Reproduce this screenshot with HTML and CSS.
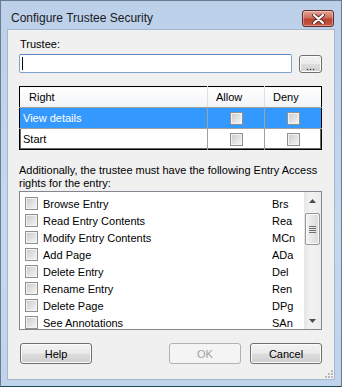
FILE: index.html
```html
<!DOCTYPE html>
<html lang="en">
<head>
    <meta charset="UTF-8">
    <title>Configure Trustee Security</title>
    <link rel="stylesheet" href="styles.css">
</head>
<body>
    <div class="window">
        <!-- Title bar -->
        <div class="titlebar">
            <span class="title">Configure Trustee Security</span>
            <button class="close-btn" aria-label="Close">
                <svg width="17" height="10" viewBox="0 0 17 10">
                    <path d="M4 1 L13 9 M13 1 L4 9" stroke="#5a2a2a" stroke-width="4" stroke-linecap="round"/>
                    <path d="M4 1 L13 9 M13 1 L4 9" stroke="#ffffff" stroke-width="2.2" stroke-linecap="round"/>
                </svg>
            </button>
        </div>

        <div class="client">
            <div class="label">Trustee:</div>
            <div class="trustee-row">
                <div class="text-input"><span class="caret"></span></div>
                <button class="btn browse-btn">...</button>
            </div>

            <table class="rights">
                <thead>
                    <tr>
                        <th class="col-right">Right</th>
                        <th class="col-allow">Allow</th>
                        <th class="col-deny">Deny</th>
                    </tr>
                </thead>
                <tbody>
                    <tr class="selected">
                        <td>View details</td>
                        <td class="center"><span class="check"></span></td>
                        <td class="center"><span class="check"></span></td>
                    </tr>
                    <tr>
                        <td>Start</td>
                        <td class="center"><span class="check"></span></td>
                        <td class="center"><span class="check"></span></td>
                    </tr>
                </tbody>
            </table>

            <p class="note">Additionally, the trustee must have the following Entry Access rights for the entry:</p>

            <div class="listbox">
                <ul class="items">
                    <li><span class="check"></span><span class="name">Browse Entry</span><span class="abbr">Brs</span></li>
                    <li><span class="check"></span><span class="name">Read Entry Contents</span><span class="abbr">Rea</span></li>
                    <li><span class="check"></span><span class="name">Modify Entry Contents</span><span class="abbr">MCn</span></li>
                    <li><span class="check"></span><span class="name">Add Page</span><span class="abbr">ADa</span></li>
                    <li><span class="check"></span><span class="name">Delete Entry</span><span class="abbr">Del</span></li>
                    <li><span class="check"></span><span class="name">Rename Entry</span><span class="abbr">Ren</span></li>
                    <li><span class="check"></span><span class="name">Delete Page</span><span class="abbr">DPg</span></li>
                    <li><span class="check"></span><span class="name">See Annotations</span><span class="abbr">SAn</span></li>
                </ul>
                <div class="scrollbar">
                    <div class="arrow">
                        <svg width="7" height="4" viewBox="0 0 7 4"><path d="M0 4 L3.5 0 L7 4 Z" fill="#4d4d4d"/></svg>
                    </div>
                    <div class="track">
                        <div class="thumb">
                            <span class="grip"></span>
                        </div>
                    </div>
                    <div class="arrow">
                        <svg width="7" height="4" viewBox="0 0 7 4"><path d="M0 0 L7 0 L3.5 4 Z" fill="#4d4d4d"/></svg>
                    </div>
                </div>
            </div>

            <div class="button-row">
                <button class="btn dialog-btn">Help</button>
                <div class="spacer"></div>
                <button class="btn dialog-btn" disabled>OK</button>
                <button class="btn dialog-btn">Cancel</button>
            </div>

            <div class="grip-row">
                <svg class="size-grip" width="9" height="9" viewBox="0 0 9 9">
                    <g fill="#b8b8b8">
                        <rect x="7" y="1" width="2" height="2"/>
                        <rect x="4" y="4" width="2" height="2"/>
                        <rect x="7" y="4" width="2" height="2"/>
                        <rect x="1" y="7" width="2" height="2"/>
                        <rect x="4" y="7" width="2" height="2"/>
                        <rect x="7" y="7" width="2" height="2"/>
                    </g>
                </svg>
            </div>
        </div>
    </div>
</body>
</html>
```

FILE: styles.css
```css
body {
    margin: 0;
    font-family: "Liberation Sans", Arial, sans-serif;
    font-size: 11px;
    color: #000;
}

.window {
    width: 342px;
    height: 387px;
    box-sizing: border-box;
    border: 1px solid #6b7c8f;
    border-bottom-color: #1f4656;
    background: linear-gradient(to bottom, #bcd0ea, #c6d8ee 60%, #bfd3ec);
    display: flex;
    flex-direction: column;
}

.titlebar {
    height: 28px;
    display: flex;
    align-items: flex-start;
    justify-content: space-between;
    padding: 0 7px 0 10px;
}

.title {
    font-size: 12px;
    margin-top: 10px;
    color: #1a1a1a;
}

.close-btn {
    margin-top: 9px;
    width: 32px;
    height: 17px;
    border: 1px solid #5f2b2b;
    border-radius: 3px;
    background: linear-gradient(to bottom, #e7a595, #cf6d5c 45%, #b8422f 55%, #c85a44);
    box-shadow: inset 0 0 0 1px rgba(255, 255, 255, 0.35);
    padding: 0;
    display: flex;
    align-items: center;
    justify-content: center;
}

.client {
    margin: 0 6px;
    height: 351px;
    background-color: #f0f0f0;
    border: 1px solid #a7b8cd;
    box-sizing: border-box;
    padding: 8px 12px 0 11px;
    display: flex;
    flex-direction: column;
}

.label {
    height: 13px;
    line-height: 13px;
    padding-left: 1px;
}

.trustee-row {
    margin-top: 3px;
    display: flex;
    gap: 7px;
    align-items: flex-start;
}

.text-input {
    flex: 1;
    height: 19px;
    box-sizing: border-box;
    background-color: #fff;
    border: 1px solid #7da2ce;
    border-top-color: #5c89c4;
    border-radius: 2px;
    display: flex;
    align-items: center;
    padding-left: 2px;
}

.caret {
    width: 1px;
    height: 13px;
    background-color: #000;
}

.btn {
    font-family: "Liberation Sans", Arial, sans-serif;
    font-size: 11px;
    color: #000;
    border: 1px solid #707070;
    border-radius: 3px;
    background: linear-gradient(to bottom, #f2f2f2 0%, #ebebeb 48%, #dddddd 52%, #cfcfcf 100%);
    box-shadow: inset 0 0 0 1px #fcfcfc;
    padding: 0;
}

.browse-btn {
    width: 23px;
    height: 18px;
    margin-top: 1px;
    line-height: 10px;
    padding-top: 4px;
}

.rights {
    margin-top: 13px;
    width: 303px;
    border-collapse: collapse;
    border: 1px solid #000;
    box-shadow: inset 0 0 0 1px #6a6a6a;
    background-color: #fff;
    table-layout: fixed;
}

.rights th {
    height: 20px;
    padding: 0 0 0 8px;
    font-weight: normal;
    text-align: left;
    background: linear-gradient(to bottom, #ffffff, #f3f4f6);
    border-left: 1px solid #e0e0e0;
    border-bottom: 1px solid #a0a0a0;
}

.rights th.col-right {
    width: 178px;
    padding-left: 9px;
    border-left: none;
}

.rights th.col-allow {
    width: 48px;
}

.rights td {
    height: 20px;
    padding: 0 0 0 3px;
    border-left: 1px solid #a0a0a0;
    border-top: 1px solid #a0a0a0;
}

.rights td:first-child {
    border-left: none;
}

.rights td.center {
    padding: 0;
    text-align: center;
    vertical-align: middle;
}

.rights tr.selected td {
    background-color: #3399ff;
    color: #fff;
}

.check {
    display: inline-block;
    width: 13px;
    height: 13px;
    box-sizing: border-box;
    border: 1px solid #8e8f8f;
    background: linear-gradient(135deg, #c9c9c9, #e2e2e2 55%, #f7f7f7);
    box-shadow: inset 0 0 0 1px #f2f2f2;
    vertical-align: middle;
}

.note {
    margin: 14px 0 0 0;
    line-height: 13px;
}

.listbox {
    margin-top: 1px;
    height: 139px;
    width: 303px;
    box-sizing: border-box;
    border: 1px solid #828790;
    background-color: #fff;
    display: flex;
    overflow: hidden;
}

.items {
    list-style: none;
    margin: 0;
    padding: 3px 0 0 5px;
    flex: 1;
}

.items li {
    height: 17px;
    display: flex;
    align-items: center;
}

.items .name {
    flex: 1;
    margin-left: 5px;
}

.items .abbr {
    width: 32px;
}

.scrollbar {
    width: 17px;
    display: flex;
    flex-direction: column;
    background: linear-gradient(to right, #e6e6e6, #f2f2f2 40%, #ececec);
}

.arrow {
    height: 17px;
    display: flex;
    align-items: center;
    justify-content: center;
}

.track {
    flex: 1;
}

.thumb {
    margin: 4px 1px 0 1px;
    height: 32px;
    box-sizing: border-box;
    border: 1px solid #979797;
    border-radius: 2px;
    background: linear-gradient(to right, #f3f3f3, #e6e6e6 50%, #d9d9d9);
    box-shadow: inset 0 0 0 1px #fafafa;
    display: flex;
    align-items: center;
    justify-content: center;
}

.grip {
    width: 7px;
    height: 7px;
    background: repeating-linear-gradient(to bottom, #707070 0 1px, transparent 1px 2px);
}

.button-row {
    margin-top: 13px;
    display: flex;
    gap: 9px;
    padding-left: 1px;
}

.spacer {
    flex: 1;
}

.dialog-btn {
    width: 72px;
    height: 21px;
}

.dialog-btn:disabled {
    color: #a0a0a0;
    border-color: #adb2b5;
    background: #f4f4f4;
    box-shadow: none;
}

.grip-row {
    margin-top: auto;
    display: flex;
    justify-content: flex-end;
    margin-right: -11px;
    padding-bottom: 1px;
}
```
